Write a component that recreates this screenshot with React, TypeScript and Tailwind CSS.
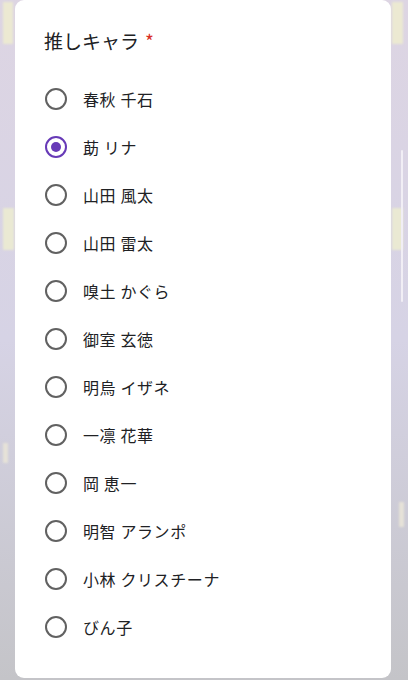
import React from "react";

const options = [
  "春秋 千石",
  "莇 リナ",
  "山田 風太",
  "山田 雷太",
  "嗅土 かぐら",
  "御室 玄徳",
  "明烏 イザネ",
  "一凛 花華",
  "岡 恵一",
  "明智 アランポ",
  "小林 クリスチーナ",
  "びん子",
];

function Radio({ checked }: { checked: boolean }) {
  return checked ? (
    <span className="flex h-[22px] w-[22px] items-center justify-center rounded-full border-2 border-[#673ab7]">
      <span className="h-[10px] w-[10px] rounded-full bg-[#673ab7]" />
    </span>
  ) : (
    <span className="h-[22px] w-[22px] rounded-full border-2 border-[#616161]" />
  );
}

export default function App() {
  return (
    <div
      className="flex h-[680px] w-[408px] overflow-hidden bg-gradient-to-b from-[#ddd5e3] via-[#d6d3e5] to-[#c4c4c8]"
      style={{ fontFamily: '"Noto Sans CJK JP", "Noto Sans", sans-serif' }}
    >
      {/* left blurred strip */}
      <div className="flex w-[15px] shrink-0 flex-col pl-[3px] pt-[2px]">
        <div className="h-[42px] w-[10px] bg-[#ece9d2] blur-[1px]" />
        <div className="mt-[164px] h-[42px] w-[11px] bg-[#eae9d3] blur-[1px]" />
        <div className="mt-[193px] h-[20px] w-[5px] bg-[#e6e2d8] blur-[1px]" />
      </div>

      <div className="h-[678px] w-[376px] shrink-0 rounded-[9px] bg-white pl-[29px] pt-[29px]">
        <div className="flex h-[24px] items-center text-[19px] text-[#202124]">
          <span>推しキャラ</span>
          <span className="ml-[6px] text-[#d93025]">*</span>
        </div>
        <div className="mt-[22px] flex flex-col">
          {options.map((o, i) => (
            <div key={o} className="flex h-[48px] items-center">
              <span className="ml-[1px] flex w-[38px]">
                <Radio checked={i === 1} />
              </span>
              <span className="text-[16px] tracking-[0.6px] text-[#202124]">{o}</span>
            </div>
          ))}
        </div>
      </div>

      {/* right blurred strip with scrollbar */}
      <div className="relative flex w-[17px] shrink-0 flex-col pl-[1px] pt-[2px]">
        <div className="h-[42px] w-[11px] bg-[#ece9d2] blur-[1px]" />
        <div className="mt-[164px] h-[42px] w-[11px] bg-[#eae9d3] blur-[1px]" />
        <div className="ml-[7px] mt-[252px] h-[25px] w-[5px] bg-[#e6e2d8] blur-[1px]" />
        <div className="absolute left-[10px] top-[150px] h-[152px] w-[2px] rounded-full bg-[#f1eef5]" />
      </div>
    </div>
  );
}
